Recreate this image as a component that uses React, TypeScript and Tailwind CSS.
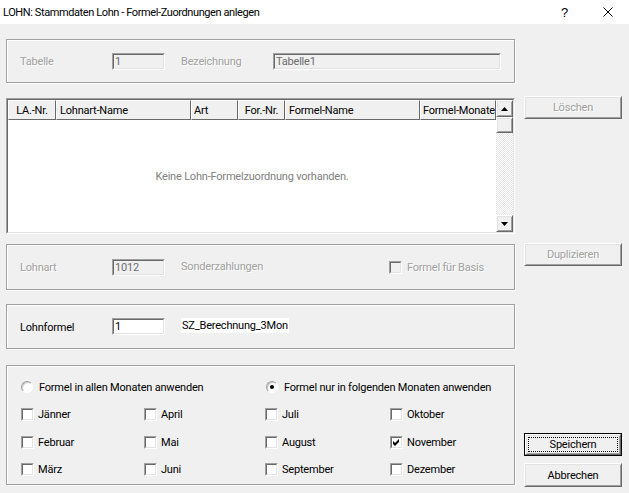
import React from "react";

const outerSunken = "border border-t-[#a0a0a0] border-l-[#a0a0a0] border-r-white border-b-white";
const innerSunken = "border border-t-[#696969] border-l-[#696969] border-r-[#e3e3e3] border-b-[#e3e3e3]";
const raised =
  "border border-t-white border-l-white border-r-[#696969] border-b-[#696969] shadow-[inset_1px_1px_0_#e3e3e3,inset_-1px_-1px_0_#a0a0a0]";
const group = "border border-[#a0a0a0] shadow-[inset_1px_1px_0_#ffffff,1px_1px_0_#ffffff]";
const dis = "text-[#a0a0a0] [text-shadow:1px_1px_0_#ffffff]";

function Input({ value, width, disabled }: { value: string; width: string; disabled?: boolean }) {
  return (
    <div className={`${width} h-[17px] ${outerSunken}`}>
      <div
        className={`h-full ${innerSunken} ${disabled ? "bg-[#f0f0f0] text-[#6d6d6d]" : "bg-white text-black"} flex items-center pl-[1px]`}
      >
        {value}
      </div>
    </div>
  );
}

function Check({ checked, disabled }: { checked?: boolean; disabled?: boolean }) {
  return (
    <div className={`w-[13px] h-[13px] shrink-0 ${outerSunken}`}>
      <div className={`w-full h-full ${innerSunken} ${disabled ? "bg-[#f0f0f0]" : "bg-white"} flex items-center justify-center`}>
        {checked && (
          <svg width="7" height="7" viewBox="0 0 7 7">
            <path d="M0 2 L2 4 L6 0 L6 3 L2 7 L0 5 Z" fill="#000" />
          </svg>
        )}
      </div>
    </div>
  );
}

function Radio({ on }: { on?: boolean }) {
  return (
    <div className="w-[12px] h-[12px] shrink-0 rounded-full bg-white border border-t-[#a0a0a0] border-l-[#a0a0a0] border-r-white border-b-white shadow-[inset_1px_1px_0_#c8c8c8] flex items-center justify-center">
      {on && <div className="w-[4px] h-[4px] rounded-full bg-black" />}
    </div>
  );
}

function Month({ label, checked }: { label: string; checked?: boolean }) {
  return (
    <div className="flex items-center">
      <Check checked={checked} />
      <span className="ml-[4px]">{label}</span>
    </div>
  );
}

function Arrow({ up }: { up?: boolean }) {
  return (
    <div className={`h-[17px] bg-[#f0f0f0] ${raised} flex items-center justify-center`}>
      <svg width="7" height="4" viewBox="0 0 7 4">
        {up ? <polygon points="0,4 3.5,0 7,4" fill="#000" /> : <polygon points="0,0 7,0 3.5,4" fill="#000" />}
      </svg>
    </div>
  );
}

const headCell =
  "h-[20px] shrink-0 whitespace-nowrap overflow-hidden border-t border-l border-t-white border-l-white border-r border-b border-r-[#696969] border-b-[#696969] bg-[#f0f0f0] flex items-center";

export default function App() {
  return (
    <div className="w-[629px] h-[493px] bg-[#f0f0f0] overflow-hidden text-black font-['Roboto',sans-serif] text-[11px] tracking-[-0.2px] leading-none">
      <div className="h-[24px] bg-white flex items-center">
        <span className="pl-[3px] text-[11px] tracking-[-0.4px] whitespace-nowrap">LOHN: Stammdaten Lohn - Formel-Zuordnungen anlegen</span>
        <span className="ml-auto mr-[35px] text-[13px] font-['Liberation_Sans',sans-serif]">?</span>
        <svg width="10" height="10" viewBox="0 0 10 10" className="mr-[16px]">
          <path d="M0.5 0.5 L9.5 9.5 M9.5 0.5 L0.5 9.5" stroke="#000" strokeWidth="1" />
        </svg>
      </div>

      <div className="flex pl-[6px] pt-[15px]">
        <div className="w-[509px] flex flex-col">
          <div className={`${group} h-[44px] flex items-center pl-[13px]`}>
            <span className={`w-[92px] ${dis}`}>Tabelle</span>
            <Input value="1" width="w-[53px]" disabled />
            <span className={`ml-[16px] w-[92px] ${dis}`}>Bezeichnung</span>
            <Input value="Tabelle1" width="w-[228px]" disabled />
          </div>

          <div className={`mt-[15px] h-[136px] ${outerSunken}`}>
            <div className={`h-full ${innerSunken} bg-white flex`}>
              <div className="flex-1 flex flex-col">
                <div className="flex">
                  <div className={`${headCell} w-[48px] justify-center`}>LA.-Nr.</div>
                  <div className={`${headCell} w-[135px] pl-[3px]`}>Lohnart-Name</div>
                  <div className={`${headCell} w-[47px] pl-[2px]`}>Art</div>
                  <div className={`${headCell} w-[47px] justify-center`}>For.-Nr.</div>
                  <div className={`${headCell} w-[135px] pl-[3px]`}>Formel-Name</div>
                  <div className={`${headCell} w-[76px] pl-[2px]`}>Formel-Monate</div>
                </div>
                <div className="flex-1 flex items-center justify-center text-[#808080]">
                  Keine Lohn-Formelzuordnung vorhanden.
                </div>
              </div>
              <div className="w-[17px] flex flex-col">
                <Arrow up />
                <div className={`h-[16px] bg-[#f0f0f0] ${raised}`} />
                <div className="flex-1 bg-[repeating-conic-gradient(#ffffff_0_25%,#e6e6e6_0_50%)] bg-[length:2px_2px]" />
                <Arrow />
              </div>
            </div>
          </div>

          <div className={`mt-[10px] ${group} h-[46px] flex items-center pl-[13px]`}>
            <span className={`w-[92px] ${dis}`}>Lohnart</span>
            <Input value="1012" width="w-[53px]" disabled />
            <span className={`ml-[16px] w-[208px] -mt-[2px] ${dis}`}>Sonderzahlungen</span>
            <Check disabled />
            <span className={`ml-[5px] ${dis}`}>Formel für Basis</span>
          </div>

          <div className={`mt-[14px] ${group} h-[45px] flex items-center pl-[13px]`}>
            <span className="w-[92px] pt-[2px]">Lohnformel</span>
            <Input value="1" width="w-[53px]" />
            <span className="ml-[16px] -mt-[3px] bg-white px-[1px] py-[2px]">SZ_Berechnung_3Mon</span>
          </div>

          <div className={`mt-[16px] ${group} h-[120px] flex flex-col pl-[14px] pt-[10px]`}>
            <div className="h-[22px] flex items-center">
              <div className="w-[245px] flex items-center">
                <Radio />
                <span className="ml-[6px]">Formel in allen Monaten anwenden</span>
              </div>
              <div className="flex items-center">
                <Radio on />
                <span className="ml-[6px]">Formel nur in folgenden Monaten anwenden</span>
              </div>
            </div>
            <div className="mt-[2px] grid grid-cols-[123px_121px_125px_1fr] grid-rows-[28px_28px_26px] items-center">
              <Month label="Jänner" />
              <Month label="April" />
              <Month label="Juli" />
              <Month label="Oktober" />
              <Month label="Februar" />
              <Month label="Mai" />
              <Month label="August" />
              <Month label="November" checked />
              <Month label="März" />
              <Month label="Juni" />
              <Month label="September" />
              <Month label="Dezember" />
            </div>
          </div>
        </div>

        <div className="ml-[9px] w-[98px] flex flex-col">
          <div className={`mt-[57px] h-[23px] ${raised} bg-[#f0f0f0] flex items-center justify-center ${dis}`}>Löschen</div>
          <div className={`mt-[124px] h-[23px] ${raised} bg-[#f0f0f0] flex items-center justify-center ${dis}`}>Duplizieren</div>
          <div className="mt-[167px] h-[23px] border border-black">
            <div className={`h-full ${raised} bg-[#f0f0f0] p-[2px]`}>
              <div className="h-full border border-dotted border-black flex items-center justify-center">Speichern</div>
            </div>
          </div>
          <div className={`mt-[7px] h-[24px] ${raised} bg-[#f0f0f0] flex items-center justify-center`}>Abbrechen</div>
        </div>
      </div>
    </div>
  );
}
